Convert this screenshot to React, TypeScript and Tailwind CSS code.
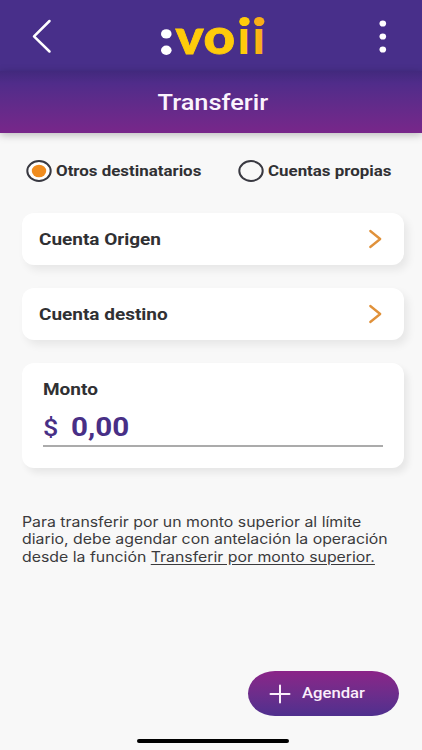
import type { ReactNode } from "react";

const ROBOTO = "font-[Roboto,'Liberation_Sans',sans-serif]";

function Logo() {
  return (
    <svg width="108" height="64" viewBox="158 3.5 108 64" role="img" aria-label=":voii" className="overflow-visible">
      <defs>
        <linearGradient id="amber" x1="0" y1="0" x2="1" y2="0">
          <stop offset="0" stopColor="#fdc010" />
          <stop offset="1" stopColor="#f7a51c" />
        </linearGradient>
      </defs>
      <ellipse cx="166.3" cy="33.4" rx="5.3" ry="4.7" fill="#fff" />
      <ellipse cx="166.3" cy="49.7" rx="5.3" ry="4.7" fill="#fff" />
      <g fontFamily="Lato, sans-serif" fontWeight="900" fontSize="48" fill="#ffcb0b" stroke="#ffcb0b">
        <text transform="translate(175.6 53.4) scale(1.1 1)" strokeWidth="0.8">v</text>
        <text transform="translate(203.4 53.6) scale(1.14 1.02)" strokeWidth="0.8">o</text>
        <text transform="translate(237.6 53.6)" strokeWidth="0">i</text>
        <text transform="translate(252.4 53.6)" fill="url(#amber)" strokeWidth="0">i</text>
      </g>
      <ellipse cx="244.5" cy="21" rx="5.2" ry="4.6" fill="#ffcb0b" />
      <ellipse cx="259.2" cy="21" rx="5.2" ry="4.6" fill="#f9ae18" />
    </svg>
  );
}

function Radio({ checked, children }: { checked?: boolean; children: ReactNode }) {
  return (
    <label className="flex items-center gap-[4px]">
      <svg width="26" height="22" viewBox="0 0 26 22">
        <ellipse cx="13" cy="11" rx="11.7" ry="9.9" fill={checked ? "#fff" : "none"} stroke="#393941" strokeWidth="2" />
        {checked && <ellipse cx="13" cy="11" rx="7.2" ry="6.3" fill="#f08c1e" />}
      </svg>
      <span className="origin-left scale-x-[1.165] whitespace-nowrap pt-[3px] text-[14.5px] font-bold leading-none">{children}</span>
    </label>
  );
}

function AccountRow({ label }: { label: string }) {
  return (
    <button className="flex h-[52px] w-full items-center justify-between rounded-xl bg-white pl-[17px] pr-[22px] shadow-[4px_5px_9px_rgba(0,0,0,0.07)]">
      <span className="origin-left scale-x-[1.15] pt-[2px] text-[16.5px] font-bold leading-none">{label}</span>
      <svg width="14" height="20" viewBox="0 0 14 20" fill="none" stroke="#e0913a" strokeWidth="2.3" strokeLinecap="round" strokeLinejoin="round">
        <path d="M2.3 2 12.2 10 2.3 18" />
      </svg>
    </button>
  );
}

export default function App() {
  return (
    <div className={`flex h-[750px] w-[422px] flex-col overflow-hidden bg-[#f8f8f8] text-[#303033] ${ROBOTO}`}>
      <header className="flex h-[71px] shrink-0 items-center justify-between bg-[#482f8a] pl-[31px] pr-[34px]">
        <svg width="22" height="36" viewBox="0 0 22 36" fill="none" stroke="#fff" strokeWidth="2.5" strokeLinecap="round" strokeLinejoin="round">
          <path d="M18.5 3 3 18.3 18.5 33.5" />
        </svg>
        <div className="mr-[7px]">
          <Logo />
        </div>
        <svg width="10" height="36" viewBox="0 0 10 36" fill="#fff">
          <ellipse cx="4.8" cy="5.5" rx="3.3" ry="3.1" />
          <ellipse cx="4.8" cy="18.5" rx="3.3" ry="3.1" />
          <ellipse cx="4.8" cy="31.5" rx="3.3" ry="3.1" />
        </svg>
      </header>
      <div className="flex h-[62px] shrink-0 items-center justify-center bg-linear-to-b from-[#42297d] via-[#502c8a] via-20% to-[#78268a] pl-[3px] pt-[1px] shadow-[0_2px_8px_rgba(0,0,0,0.25)]">
        <h1 className="scale-x-[1.18] text-[21.5px] font-medium leading-none text-[#fbf3fd]">Transferir</h1>
      </div>

      <main className="flex flex-col pl-[22px] pr-[18px]">
        <div className="flex h-[80px] items-center pb-[5px] pl-[4px]">
          <div className="w-[212px]">
            <Radio checked>Otros destinatarios</Radio>
          </div>
          <Radio>Cuentas propias</Radio>
        </div>
        <div className="flex flex-col gap-[23px]">
          <AccountRow label="Cuenta Origen" />
          <AccountRow label="Cuenta destino" />
          <section className="h-[105px] rounded-xl bg-white pl-[21px] pr-[21px] pt-[18px] shadow-[4px_5px_7px_rgba(0,0,0,0.07)]">
            <h2 className="origin-left scale-x-[1.15] text-[16.5px] font-bold leading-[17px]">Monto</h2>
            <div className="mt-[13px] flex h-[36px] items-center border-b-2 border-[#ababab] text-[#482f86]">
              <span className="w-[28px] origin-left scale-x-[1.12] text-[24px] font-medium leading-none">$</span>
              <span className="origin-left scale-x-[1.16] text-[25.5px] font-bold leading-none">0,00</span>
            </div>
          </section>
        </div>
        <p className="mt-[45px] w-[340px] origin-left scale-x-[1.132] whitespace-nowrap font-[Inter,sans-serif] text-[14px] leading-[17.3px] text-[#3b3b3d]">
          Para transferir por un monto superior al límite
          <br />
          diario, debe agendar con antelación la operación
          <br />
          desde la función <a className="underline underline-offset-2">Transferir por monto superior.</a>
        </p>
      </main>

      <footer className="mt-auto flex flex-col">
        <button className="mr-[23px] flex h-[45px] w-[151px] items-center self-end rounded-[27px/22.5px] bg-linear-to-b from-[#8b2488] to-[#4f2f8e] pl-[21px] text-[#fbeefb]">
          <svg width="22" height="20" viewBox="0 0 22 20" stroke="#fbeefb" strokeWidth="2" strokeLinecap="round">
            <path d="M1.5 10h19M11 1.5v17" />
          </svg>
          <span className="ml-[11px] origin-left scale-x-[1.15] pt-[2px] text-[14.5px] font-medium leading-none">Agendar</span>
        </button>
        <div className="mb-[7px] ml-[137px] mt-[23px] h-[4px] w-[152px] rounded-full bg-black" />
      </footer>
    </div>
  );
}
